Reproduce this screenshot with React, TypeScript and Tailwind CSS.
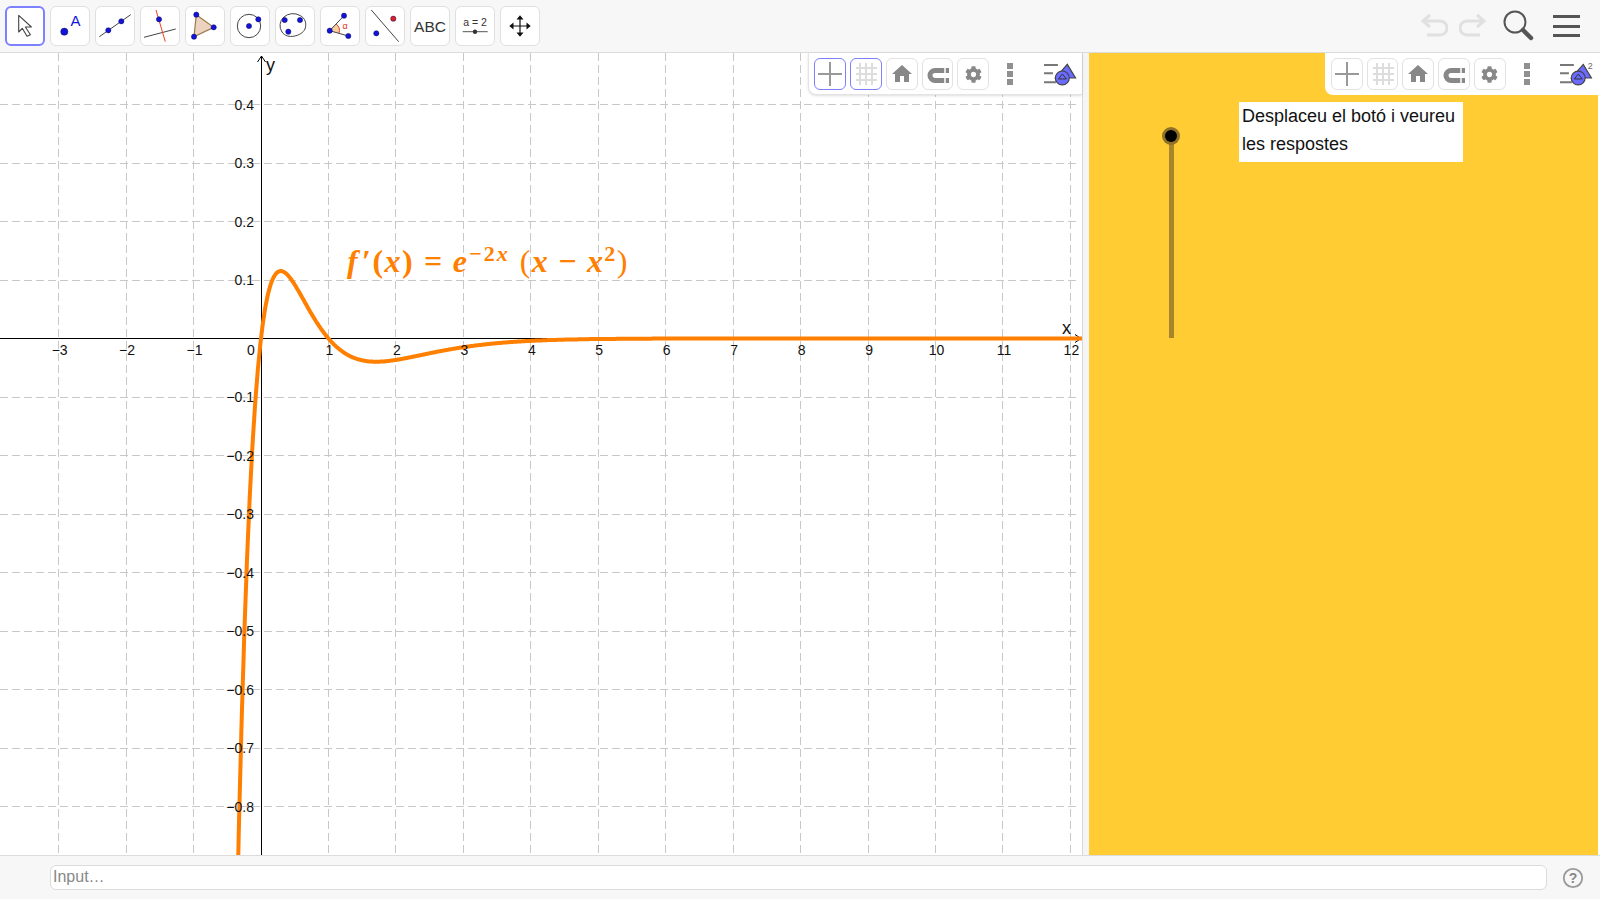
import React from "react";
import { FaCog } from "react-icons/fa";
import { MdHome } from "react-icons/md";

const X0 = 261;
const UX = 67.45;
const Y0 = 285.5;
const UY = 585;
const BLUE = "#1414d8";

const px = (x: number) => X0 + x * UX;
const py = (y: number) => Y0 - y * UY;
const snap = (v: number) => Math.floor(v) + 0.5;

const curve = Array.from({ length: 1300 }, (_, i) => {
  const x = -0.4 + i * 0.01;
  const y = Math.exp(-2 * x) * (x - x * x);
  return `${i === 0 ? "M" : "L"}${px(x).toFixed(1)} ${py(y).toFixed(1)}`;
}).join(" ");

const xTicks = [-3, -2, -1, 1, 2, 3, 4, 5, 6, 7, 8, 9, 10, 11, 12];
const yTicks = [4, 3, 2, 1, -1, -2, -3, -4, -5, -6, -7, -8];

const Dot = ({ x, y, r = 2.6, fill = BLUE }: { x: number; y: number; r?: number; fill?: string }) => (
  <circle cx={x} cy={y} r={r} fill={fill} stroke="#0a0a60" strokeWidth="0.5" />
);

const toolIcons: React.ReactNode[] = [
  <path d="M13.7 9.4 26.4 21h-6l5 7.7-3.4 1.6-4.7-8-3.6 3.7z" fill="#fff" stroke="#444" strokeWidth="1.1" strokeLinejoin="round" />,
  <>
    <Dot x={14.3} y={25.7} r={3.6} />
    <text x={20.5} y={19.5} fontSize="15" fill={BLUE}>A</text>
  </>,
  <>
    <path d="M4.3 30.7 35.7 8.7" stroke="#444" strokeWidth="1" />
    <Dot x={13.3} y={24.3} />
    <Dot x={26.3} y={15.3} />
  </>,
  <>
    <path d="M4 31.3 35.7 23" stroke="#444" strokeWidth="1" />
    <path d="M16 4 25.3 35.7" stroke="#f04020" strokeWidth="1" />
    <Dot x={19} y={13.3} />
  </>,
  <>
    <path d="M11.3 8.7 28.7 21.3 9 30.7z" fill="#ecd3c0" stroke="#9a7a4a" strokeWidth="1.2" />
    <Dot x={11.3} y={8.7} />
    <Dot x={28.7} y={21.3} />
    <Dot x={9} y={30.7} />
  </>,
  <>
    <circle cx={19} cy={20} r={11.7} fill="none" stroke="#444" strokeWidth="1" />
    <Dot x={19} y={20} />
    <Dot x={28.3} y={13.3} />
  </>,
  <>
    <path d="M7 26A13 12 0 0 1 25 9.5C30 12 32 17 30 23 27 30 12 34 7 26z" fill="none" stroke="#444" strokeWidth="1" />
    <Dot x={9.7} y={14} />
    <Dot x={13.3} y={25.7} />
    <Dot x={25} y={14} />
  </>,
  <>
    <path d="M9.7 24.7 19 27A8 8 0 0 0 16 18z" fill="#f8d0a0" />
    <path d="M24 9.7 9.7 24.7 28.3 30" fill="none" stroke="#444" strokeWidth="1" />
    <path d="M16 18A8 8 0 0 1 19 27" fill="none" stroke="#e04020" strokeWidth="1" />
    <Dot x={24} y={9.7} />
    <Dot x={9.7} y={24.7} />
    <Dot x={28.3} y={30} />
    <text x={22.5} y={23} fontSize="9" fill="#e03020">α</text>
  </>,
  <>
    <path d="M6.3 4 33.7 35.7" stroke="#444" strokeWidth="1" />
    <Dot x={28.3} y={12.7} fill="#e02020" />
    <Dot x={11.3} y={27.3} />
  </>,
  <text x={20} y={26} fontSize="15.5" fill="#333" textAnchor="middle">ABC</text>,
  <>
    <text x={20} y={20} fontSize="10.5" fill="#333" textAnchor="middle">a = 2</text>
    <path d="M7.7 25.7H32.7" stroke="#555" strokeWidth="1" />
    <circle cx={20} cy={25.7} r={2.2} fill="#333" />
  </>,
  <>
    <path d="M20 11V29M11 20H29" stroke="#111" strokeWidth="1.2" />
    <path d="M20 9.3 16.5 13.5h7zM20 30.7l-3.5-4.2h7zM9.3 20l4.2-3.5v7zM30.7 20l-4.2-3.5v7z" fill="#111" />
  </>,
];

function ToolButton({ active, children }: { active?: boolean; children: React.ReactNode }) {
  return (
    <div className={`w-10 h-10 shrink-0 rounded-md bg-white border ${active ? "border-2 border-[#7d80ff]" : "border-[#e0e0e0]"}`}>
      <svg viewBox="0 0 40 40" className={`block w-10 h-10 ${active ? "-m-[2px]" : "-m-px"}`}>
        {children}
      </svg>
    </div>
  );
}

function Toolbar() {
  return (
    <div className="h-[53px] shrink-0 flex items-center gap-[5px] pl-[5px] pr-[16px] bg-[#f7f7f7] border-b border-[#dcdcdc]">
      {toolIcons.map((icon, i) => (
        <ToolButton key={i} active={i === 0}>
          {icon}
        </ToolButton>
      ))}
      <div className="flex-1" />
      <svg width="28" height="26" viewBox="0 0 28 26" fill="none" stroke="#e0e0e0" strokeWidth="3" className="mr-[6px]">
        <path d="M3 8H20a6.5 6.5 0 0 1 0 14H7" />
        <path d="M10 2 3 8l7 6" />
      </svg>
      <svg width="28" height="26" viewBox="0 0 28 26" fill="none" stroke="#e0e0e0" strokeWidth="3" className="mr-[10px]">
        <path d="M25 8H8a6.5 6.5 0 0 0 0 14H21" />
        <path d="M18 2l7 6-7 6" />
      </svg>
      <svg width="34" height="34" viewBox="0 0 34 34" fill="none" className="mr-[12px]">
        <circle cx="13" cy="13" r="10.5" stroke="#555" strokeWidth="2" />
        <path d="M21 21 29 29" stroke="#555" strokeWidth="4.5" strokeLinecap="round" />
      </svg>
      <div className="flex flex-col gap-[6.5px] w-[27px] mr-[4px]">
        <div className="h-[3px] bg-[#555]" />
        <div className="h-[3px] bg-[#555]" />
        <div className="h-[3px] bg-[#555]" />
      </div>
    </div>
  );
}

function StyleBtn({ active, children }: { active?: boolean; children: React.ReactNode }) {
  return (
    <div className={`w-8 h-8 flex items-center justify-center rounded-md border ${active ? "border-[#7d80ff]" : "border-[#e2e2e2]"}`}>
      {children}
    </div>
  );
}

function StyleBar({ active, badge, rounded }: { active?: boolean; badge?: boolean; rounded?: boolean }) {
  return (
    <div className={`absolute top-0 right-0 h-[42px] pt-[5px] flex gap-1 bg-white rounded-bl-lg ${rounded ? "w-[274px] pl-[5px] border-l border-b border-[#e4e4e4] shadow-sm" : "w-[273px] pl-[6px]"}`}>
      <StyleBtn active={active}>
        <svg width="28" height="28" viewBox="0 0 28 28" stroke="#999" strokeWidth="2">
          <path d="M2 14H26M14 2V26" />
        </svg>
      </StyleBtn>
      <StyleBtn active={active}>
        <svg width="28" height="28" viewBox="0 0 28 28" stroke="#ddd" strokeWidth="2">
          <path d="M4 8H25M4 14H25M4 20H25M8 3V25M14 3V25M20 3V25" />
        </svg>
      </StyleBtn>
      <StyleBtn>
        <MdHome size={24} color="#888" />
      </StyleBtn>
      <StyleBtn>
        <svg width="28" height="28" viewBox="0 0 28 28" fill="none">
          <path d="M25 10.5H11a5 5 0 0 0 0 10H25" stroke="#888" strokeWidth="5" />
          <path d="M21 5V26" stroke="#fff" strokeWidth="1.5" />
        </svg>
      </StyleBtn>
      <StyleBtn>
        <FaCog size={17} color="#888" />
      </StyleBtn>
      <div className="w-8 h-8 ml-px flex flex-col items-center justify-center gap-[2px]">
        <div className="w-[6px] h-[6px] bg-[#909090]" />
        <div className="w-[6px] h-[6px] bg-[#909090]" />
        <div className="w-[6px] h-[6px] bg-[#909090]" />
      </div>
      <svg width="40" height="34" viewBox="0 0 40 34" fill="none" className="ml-[12px] mt-[1px]">
        <path d="M2 6H16M2 14.3H11M2 23.3H14" stroke="#777" strokeWidth="2" />
        <path d="M25.4 5.3 33.7 19H13.7z" fill="#6b6bff" stroke="#444" strokeWidth="1.2" />
        <circle cx="20.4" cy="19" r="7" fill="#6b6bff" stroke="#444" strokeWidth="1.2" />
        <path d="M16.5 20h8M20.5 15l-4 5M20.5 15l4 5" stroke="#333" strokeWidth="1" />
        {badge && <text x="30" y="10" fontSize="9" fill="#666">2</text>}
      </svg>
    </div>
  );
}

function Graph() {
  return (
    <svg viewBox="0 0 1082 802" className="block w-[1082px] h-[802px] [font-family:'Liberation_Sans',sans-serif]">
      <g stroke="#c8c8c8" strokeWidth="1" strokeDasharray="8 4">
        {xTicks.map((t) => (
          <path key={t} d={`M${snap(px(t))} 0V802`} />
        ))}
        {yTicks.map((t) => (
          <path key={t} d={`M0 ${snap(py(t / 10))}H1078`} />
        ))}
      </g>
      <path d={`M0 ${Y0}H1081M${snap(X0)} 3V802`} stroke="#000" strokeWidth="1" />
      <path d={`M1075 ${Y0 - 4}l6 4-6 4M${snap(X0) - 4} 9l4-6 4 6`} stroke="#000" strokeWidth="1" fill="none" />
      <path d={curve} fill="none" stroke="#ff7f00" strokeWidth="4" strokeLinejoin="round" />
      <g fontSize="14" fill="#111">
        <text x="266" y="18" fontSize="18">y</text>
        <text x="1062" y="281" fontSize="18">x</text>
        <text x="251" y={Y0 + 16.5} textAnchor="middle">0</text>
        {xTicks.map((t) => (
          <text key={t} x={px(t) + 1} y={Y0 + 16.5} textAnchor="middle">
            {t < 0 ? `\u2212${-t}` : t}
          </text>
        ))}
        {yTicks.map((t) => (
          <text key={t} x="254" y={py(t / 10) + 5} textAnchor="end">
            {t < 0 ? `\u22120.${-t}` : `0.${t}`}
          </text>
        ))}
      </g>
    </svg>
  );
}

function Formula() {
  return (
    <div className="absolute left-[347px] top-[188px] whitespace-nowrap text-[#ff7f00] font-bold text-[32px] leading-[40px] tracking-[1.4px] [font-family:'Liberation_Serif',serif]">
      <i>f</i>
      <span className="ml-[3px]">′</span>(<i>x</i>)<span className="ml-[10px]">=</span>
      <i className="ml-[9px]">e</i>
      <span className="text-[22px] relative -top-[11px] tracking-[2px] ml-px">
        −2<i>x</i>
      </span>
      <span className="ml-[10px] font-normal">(</span>
      <i>x</i>
      <span className="ml-[9px]">−</span>
      <i className="ml-[9px]">x</i>
      <span className="text-[22px] relative -top-[11px]">2</span>
      <span className="font-normal">)</span>
    </div>
  );
}

export default function App() {
  return (
    <div className="w-[1600px] h-[900px] flex flex-col bg-white overflow-hidden [font-family:'Liberation_Sans',sans-serif]">
      <Toolbar />
      <div className="flex h-[802px]">
        <div className="relative w-[1082px] shrink-0 bg-white">
          <Graph />
          <Formula />
          <StyleBar active rounded />
        </div>
        <div className="w-[7px] shrink-0 bg-[#f5f5f5] border-l border-[#d8d8d8]" />
        <div className="relative w-[509px] shrink-0 bg-[#ffcc33]">
          <StyleBar badge />
          <div className="absolute left-[150px] top-[49px] w-[224px] h-[60px] bg-white pl-[3px] text-[18px] leading-[28px] text-[#111]">
            Desplaceu el botó i veureu
            <br />
            les respostes
          </div>
          <div className="absolute left-[80px] top-[83px] w-[5px] h-[202px] bg-[#a8842b]" />
          <div className="absolute left-[73px] top-[74px] w-[18px] h-[18px] rounded-full bg-[#8f7128] flex items-center justify-center">
            <div className="w-[12px] h-[12px] rounded-full bg-black" />
          </div>
        </div>
        <div className="flex-1 bg-white" />
      </div>
      <div className="h-[44px] shrink-0 flex items-center gap-[15px] pl-[50px] bg-[#f7f7f7] border-t border-[#dcdcdc]">
        <div className="w-[1497px] h-[25px] flex items-center pl-[2px] pb-px bg-white rounded-md border border-[#dcdcdc] text-[16px] text-[#888]">
          Input…
        </div>
        <svg width="22" height="22" viewBox="0 0 22 22" fill="none">
          <circle cx="11" cy="11" r="9.2" stroke="#999" strokeWidth="1.8" />
          <text x="11" y="16" fontSize="14" fontWeight="700" fill="#888" textAnchor="middle">?</text>
        </svg>
      </div>
    </div>
  );
}
